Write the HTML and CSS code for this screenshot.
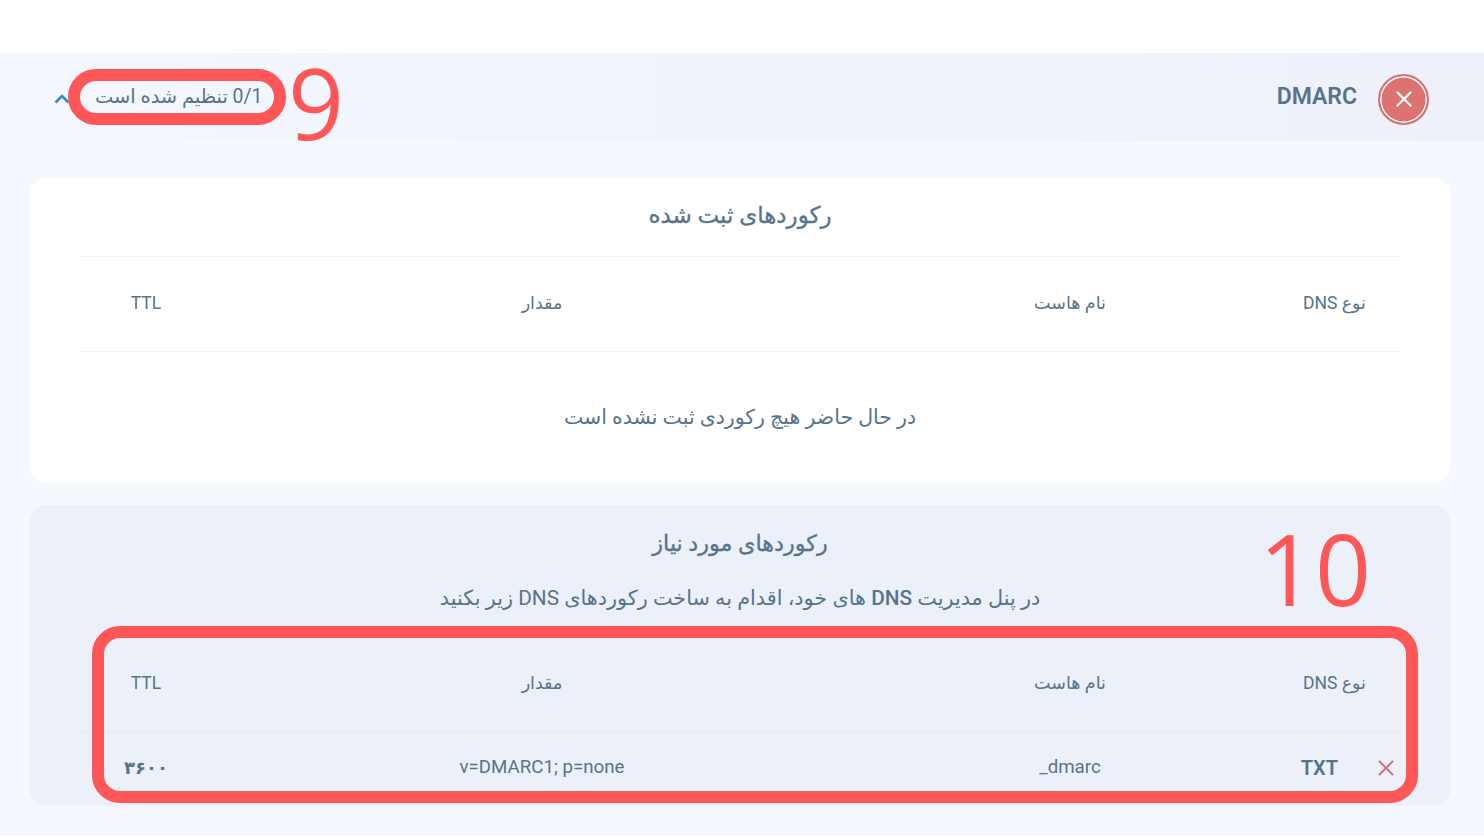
FILE: index.html
```html
<!DOCTYPE html>
<html lang="fa" dir="rtl">
<head>
    <meta charset="UTF-8">
    <meta name="viewport" content="width=device-width, initial-scale=1.0">
    <title>DMARC</title>
    <link rel="stylesheet" href="styles.css">
</head>
<body>
<div class="panel">
    <!-- Collapsible header -->
    <div class="panel-head">
        <div class="head-title">
            <span class="status-icon">
                <svg width="16" height="16" viewBox="0 0 16 16"><path d="M1.5 1.5L14.5 14.5M14.5 1.5L1.5 14.5" fill="none" stroke="#fff" stroke-width="2.2" stroke-linecap="round"/></svg>
            </span>
            <span class="record-name">DMARC</span>
        </div>
        <div class="head-state">
            <span class="state-text"><span dir="ltr">0/1</span> تنظیم شده است</span>
            <svg class="chevron" width="16" height="10" viewBox="0 0 16 10"><path d="M1.5 8.5L8 2L14.5 8.5" fill="none" stroke="#2d8ac4" stroke-width="2.6"/></svg>
        </div>
    </div>

    <div class="panel-body">
        <!-- Registered records -->
        <section class="card card-white">
            <h3 class="card-title">رکوردهای ثبت شده</h3>
            <div class="rec-row rec-head rec-top-line">
                <div class="col-type">نوع DNS</div>
                <div class="col-host">نام هاست</div>
                <div class="col-value">مقدار</div>
                <div class="col-ttl">TTL</div>
            </div>
            <p class="empty-msg">در حال حاضر هیچ رکوردی ثبت نشده است</p>
        </section>

        <!-- Required records -->
        <section class="card card-blue">
            <h3 class="card-title card-title-req">رکوردهای مورد نیاز</h3>
            <p class="card-hint">در پنل مدیریت <b>DNS</b> های خود، اقدام به ساخت رکوردهای DNS زیر بکنید</p>
            <div class="rec-row rec-head rec-head-req">
                <div class="col-type">نوع DNS</div>
                <div class="col-host">نام هاست</div>
                <div class="col-value">مقدار</div>
                <div class="col-ttl">TTL</div>
            </div>
            <div class="rec-row rec-data">
                <div class="type-cell">
                    <svg class="row-x" width="18" height="18" viewBox="0 0 18 18"><path d="M2 2L16 16M16 2L2 16" fill="none" stroke="#dc6f6f" stroke-width="2"/></svg>
                    <b>TXT</b>
                </div>
                <div class="col-host" dir="ltr">_dmarc</div>
                <div class="col-value" dir="ltr">v=DMARC1; p=none</div>
                <div class="col-ttl ttl-val">۳۶۰۰</div>
            </div>
        </section>
    </div>
</div>

<!-- Red tutorial marks laid over the screenshot -->
<div class="mark mark-pill"></div>
<div class="mark-num num-9">9</div>
<div class="mark mark-box"></div>
<div class="mark-num num-10" dir="ltr">10</div>
</body>
</html>
```

FILE: styles.css
```css
html, body {
    height: 100%;
    margin: 0;
    overflow: hidden;
}

body {
    position: relative;
    background-color: #ffffff;
    font-family: Roboto, "DejaVu Sans", sans-serif;
    color: #56748b;
    padding-top: 53px;
    box-sizing: border-box;
}

.panel {
    height: 783px;
    background-color: #f5f8fe;
}

/* Header strip */
.panel-head {
    height: 88px;
    box-sizing: border-box;
    padding: 4px 55px 0 54px;
    display: flex;
    justify-content: space-between;
    align-items: center;
    background: linear-gradient(to left, #eef1f9, #f1f4fb 60%, #f4f7fd);
}

.head-title {
    display: flex;
    align-items: center;
    gap: 21px;
}

.status-icon {
    width: 43px;
    height: 43px;
    border-radius: 50%;
    background-color: #dd7272;
    border: 2px solid #dd7272;
    box-shadow: inset 0 0 0 1.5px #fff;
    padding: 2px;
    display: flex;
    align-items: center;
    justify-content: center;
}

.record-name {
    font-size: 23px;
    font-weight: 600;
    margin-top: -6px;
}

.head-state {
    display: flex;
    align-items: center;
    gap: 25px;
    margin-top: -6px;
}

.state-text {
    font-size: 19.4px;
}

.chevron {
    margin-top: 6px;
}

/* Cards */
.panel-body {
    padding: 37px 34px 0 30px;
}

.card {
    border-radius: 16px;
}

.card-white {
    height: 305px;
    background-color: #ffffff;
    margin-bottom: 22px;
}

.card-blue {
    height: 301px;
    background-color: #ecf0f8;
}

.card-title {
    margin: 0;
    padding: 23px 0 25px;
    height: 30px;
    line-height: 30px;
    font-size: 23px;
    font-weight: 500;
    text-align: center;
    -webkit-text-stroke: 0.3px #56748b;
}

.card-title-req {
    padding: 23px 0 0;
    font-size: 22.3px;
}

.card-hint {
    margin: 26px 0 0;
    font-size: 20.8px;
    line-height: 28px;
    text-align: center;
}

.card-hint b {
    font-weight: 500;
}

/* Record rows: 10/30/50/10 split of the row */
.rec-row {
    display: grid;
    grid-template-columns: 10% 30% 50% 10%;
    align-items: center;
    margin: 0 50px;
    font-size: 17.5px;
}

.rec-head {
    height: 95px;
    box-sizing: border-box;
    padding-bottom: 2px;
}

.rec-top-line {
    height: 96px;
    border-top: 1px solid #f3f5f8;
    border-bottom: 1px solid #f3f5f8;
}

.rec-head-req {
    border-bottom: 1px solid #e6eaf2;
    margin-top: 25px;
}

.rec-data {
    height: 70px;
    font-size: 18.7px;
}

.col-type {
    padding-right: 34px;
}

.col-host, .col-value, .col-ttl {
    text-align: center;
}

.type-cell {
    display: flex;
    align-items: center;
    gap: 39px;
    padding-right: 5px;
    margin-top: 1px;
}

.type-cell b {
    font-size: 20px;
    font-weight: 600;
}

.ttl-val {
    font-size: 18px;
    font-weight: 600;
}

.empty-msg {
    margin: 50px 0 0;
    font-size: 20.5px;
    line-height: 30px;
    text-align: center;
}

/* Tutorial marks */
.mark {
    position: absolute;
    border: 12px solid #ff5757;
    box-sizing: border-box;
}

.mark-pill {
    left: 68px;
    top: 69px;
    width: 218px;
    height: 56px;
    border-radius: 28px;
}

.mark-box {
    left: 92px;
    top: 626px;
    width: 1326px;
    height: 177px;
    border-radius: 28px;
}

.mark-num {
    position: absolute;
    color: #ff5757;
    font-family: "Open Sans", sans-serif;
    line-height: 1;
}

.num-9 {
    left: 288px;
    top: 53px;
    font-size: 98px;
}

.num-10 {
    left: 1259px;
    top: 519px;
    font-size: 98px;
}
```
